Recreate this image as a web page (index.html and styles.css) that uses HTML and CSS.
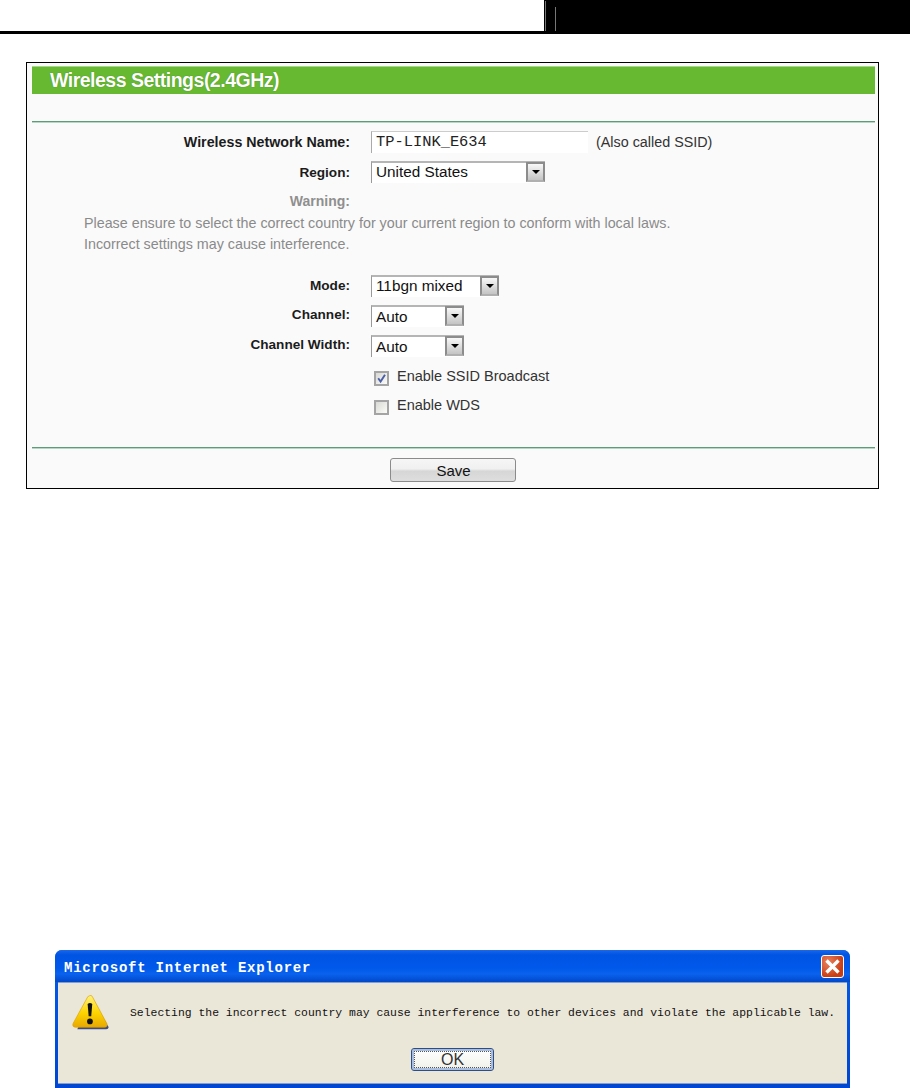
FILE: index.html
```html
<!DOCTYPE html>
<html lang="en">
<head>
<meta charset="utf-8">
<title>Wireless Settings</title>
<link rel="stylesheet" href="styles.css">
</head>
<body>
<header class="doc-head">
  <div class="doc-left"></div>
  <div class="doc-right"><i class="tick tick-long"></i><i class="tick tick-short"></i></div>
</header>

<section class="panel">
  <h1 class="panel-title">Wireless Settings(2.4GHz)</h1>
  <hr class="rule rule-top">
  <div class="row row-name">
    <span class="label">Wireless Network Name:</span>
    <span class="text-input">TP-LINK_E634</span>
    <span class="hint">(Also called SSID)</span>
  </div>
  <div class="row row-region">
    <span class="label">Region:</span>
    <span class="select select-region"><span class="select-value">United States</span><span class="select-btn"><i class="arrow"></i></span></span>
  </div>
  <div class="row row-warning">
    <span class="label label-muted">Warning:</span>
  </div>
  <p class="note">Please ensure to select the correct country for your current region to conform with local laws.<br>Incorrect settings may cause interference.</p>
  <div class="row row-mode">
    <span class="label">Mode:</span>
    <span class="select select-mode"><span class="select-value">11bgn mixed</span><span class="select-btn"><i class="arrow"></i></span></span>
  </div>
  <div class="row row-channel">
    <span class="label">Channel:</span>
    <span class="select select-auto"><span class="select-value">Auto</span><span class="select-btn"><i class="arrow"></i></span></span>
  </div>
  <div class="row row-width">
    <span class="label">Channel Width:</span>
    <span class="select select-auto"><span class="select-value">Auto</span><span class="select-btn"><i class="arrow"></i></span></span>
  </div>
  <div class="row row-check">
    <span class="label"></span>
    <span class="check-wrap"><span class="checkbox"><svg viewBox="0 0 11 11" width="11" height="11"><path d="M2.2 5.2 L4.6 8.6 L9 1.8" fill="none" stroke="#4a5fa8" stroke-width="1.9"/></svg></span><span class="check-text">Enable SSID Broadcast</span></span>
  </div>
  <div class="row row-check row-wds">
    <span class="label"></span>
    <span class="check-wrap"><span class="checkbox"></span><span class="check-text">Enable WDS</span></span>
  </div>
  <hr class="rule rule-bottom">
  <div class="save-row"><button class="save" type="button">Save</button></div>
</section>

<section class="dialog">
  <div class="dialog-bar">
    <span class="dialog-title">Microsoft Internet Explorer</span>
    <span class="close">
      <svg viewBox="0 0 21 21" width="21" height="21"><path d="M4.5 4.5 L16.5 16.5 M16.5 4.5 L4.5 16.5" stroke="#fff" stroke-width="3.4" fill="none"/></svg>
    </span>
  </div>
  <div class="dialog-body">
    <div class="dialog-msg">
      <svg class="warn-icon" viewBox="0 0 36 36" width="38" height="38">
        <defs><linearGradient id="wg" x1="0" y1="0" x2="0" y2="1"><stop offset="0" stop-color="#fff27a"/><stop offset="0.55" stop-color="#fdd400"/><stop offset="1" stop-color="#e8a800"/></linearGradient></defs>
        <path d="M18.8 4 L34.5 31 Q35 33.5 32.5 33.5 L5 33.5 Z" fill="#3e4a80"/>
        <path d="M17 1.5 Q18 1 19 2 L33 28 Q34 31.5 31 31.5 L3.5 31.5 Q0 31.5 1 28 L15 2.5 Z" fill="url(#wg)" stroke="#d99e00" stroke-width=".6"/>
        <path d="M14.8 9.5 Q17 7.6 19.2 9.5 L18.2 21 L15.8 21 Z" fill="#111"/>
        <circle cx="17" cy="26" r="2.7" fill="#111"/>
      </svg>
      <p class="dialog-text">Selecting the incorrect country may cause interference to other devices and violate the applicable law.</p>
    </div>
    <div class="dialog-actions"><button class="ok" type="button">OK</button></div>
  </div>
</section>
</body>
</html>
```
FILE: styles.css
```css
* { box-sizing: border-box; }
html, body { margin: 0; padding: 0; background: #fff; }
body { width: 910px; height: 1088px; overflow: hidden; font-family: "Liberation Sans", Arial, sans-serif; }

.doc-head { display: flex; height: 34px; border-bottom: 3px solid #000; }
.doc-left { width: 544px; }
.doc-right { flex: 1; background: #000; display: flex; align-items: flex-end; padding-left: 1px; }
.tick { display: block; width: 1px; background: #777; }
.tick-long { height: 30px; }
.tick-short { height: 24px; margin-left: 9px; }

.panel { width: 853px; height: 427px; margin: 28px 0 0 26px; border: 1px solid #000; background: #fafafa; padding: 3px 3px 0 5px; }
.panel-title { margin: 0; height: 28px; background: #67b932; border-top: 1px solid #a6d68a; color: #fff; font-size: 19.5px; letter-spacing: -0.5px; font-weight: bold; line-height: 26px; padding-left: 18px; text-shadow: 0 0 1px #3c7a18; }
.rule { margin: 0; border: 0; height: 2px; background: #5d9c76; border-bottom: 1px solid #b7d6c4; }
.rule-top { margin-top: 27px; }
.rule-bottom { margin-top: 32px; }

.row { display: grid; grid-template-columns: 318px auto auto; justify-content: start; align-items: center; column-gap: 21px; font-size: 14px; color: #111; }
.label { font-weight: bold; font-size: 13.6px; text-align: right; color: #1c1c1c; }
.label-muted { color: #8f8f8f; font-size: 14px; }
.row-name { margin-top: 8px; height: 22px; }
.row-name .label { font-size: 14.25px; }
.row-region { margin-top: 8px; height: 22px; }
.row-region .select-value { line-height: 18px; }
.row-warning { margin-top: 7px; height: 22px; }
.row-mode { margin-top: 20px; height: 22px; }
.row-mode .label { margin-bottom: 2px; }
.row-mode .select-value { line-height: 18px; }
.row-channel { margin-top: 8px; height: 22px; }
.row-channel .label { margin-bottom: 3px; }
.row-width { margin-top: 8px; height: 22px; }
.row-width .label { margin-bottom: 3px; }
.row-check { margin-top: 9px; height: 20px; }
.row-wds { margin-top: 9px; }

.text-input { width: 217px; height: 22px; background: #fff; border-left: 1px solid #aaa; border-top: 1px solid #ccc; font-family: "Liberation Mono", monospace; font-size: 15.4px; line-height: 20px; padding-left: 4px; color: #222; }
.hint { margin-left: -13px; font-size: 14.35px; color: #333; }

.select { display: flex; height: 22px; background: #fff; border-left: 1px solid #999; border-top: 2px solid #b5b5b5; font-size: 15.3px; line-height: 20px; color: #111; }
.select-value { flex: 1; padding-left: 4px; white-space: nowrap; }
.select-btn { width: 19px; height: 20px; margin-top: -1px; background: linear-gradient(#f8f8f8, #c4c4c4); border: 2px solid #8c8c8c; border-bottom-color: #b0b0b0; display: flex; align-items: center; justify-content: center; }
.arrow { width: 0; height: 0; border-left: 4px solid transparent; border-right: 4px solid transparent; border-top: 4px solid #000; }
.select-region { width: 174px; }
.select-mode { width: 128px; }
.select-auto { width: 93px; }

.check-wrap { display: flex; align-items: center; gap: 8px; padding-left: 3px; }
.checkbox { width: 15px; height: 15px; margin-top: 5px; background: linear-gradient(135deg, #d8d8d4, #fbfbf9); border: 2px solid #a4a4a4; display: block; }
.checkbox svg { display: block; }
.check-text { font-size: 14.5px; color: #333; }

.note { margin: 1px 0 0; padding-left: 52px; font-size: 14.3px; line-height: 21px; color: #8a8a8a; }

.save-row { display: flex; justify-content: center; padding: 9px 1px 0 0; }
.save { width: 126px; height: 24px; padding: 0 0 0 1px; border: 1px solid #8b8b8b; border-radius: 3px; background: linear-gradient(#f6f6f6 0, #f0f0f0 45%, #d6d6d6 55%, #dedede 100%); font-family: "Liberation Sans", Arial, sans-serif; font-size: 15px; color: #111; }

.dialog { width: 795px; height: 138px; margin: 461px 0 0 55px; background: linear-gradient(#0a5be0 0, #0054e3 40%, #0046d0 100%); border-radius: 7px 7px 0 0; overflow: hidden; }
.dialog-bar { display: flex; justify-content: space-between; align-items: center; height: 32px; padding: 2px 6px 2px 9px; background: linear-gradient(#1a68ea 0, #0054e3 15%, #0058ea 55%, #0a62ee 75%, #0048c8 100%); }
.dialog-title { font-family: "Liberation Mono", monospace; font-weight: bold; font-size: 14px; letter-spacing: 0.75px; color: #fff; white-space: nowrap; padding-top: 3px; }
.close { width: 23px; height: 23px; border: 1px solid #fff; border-radius: 3px; background: radial-gradient(circle at 30% 30%, #e8825e, #c93d14 70%); display: block; }
.close svg { display: block; }
.dialog-body { height: 102px; margin: 0 3px; background: #ebe7d8; border-top: 1px solid #7f9fdc; border-bottom: 1px solid #7f9fdc; }
.dialog-msg { display: flex; align-items: flex-start; height: 65px; padding: 11px 0 0 14px; }
.warn-icon { flex: none; }
.dialog-text { margin: 13px 0 0 20px; font-family: "Liberation Mono", monospace; font-size: 11.41px; color: #111; white-space: nowrap; }
.dialog-actions { display: flex; justify-content: center; }
.ok { width: 83px; height: 23px; padding: 0; border: 1px solid #2d4f86; border-radius: 3px; box-shadow: inset 0 0 0 2px #a9bde0; outline: 1px dotted #555; outline-offset: -4px; background: linear-gradient(#fff, #f0f0ea); font-family: "Liberation Sans", Arial, sans-serif; font-size: 16px; color: #333; }
```
